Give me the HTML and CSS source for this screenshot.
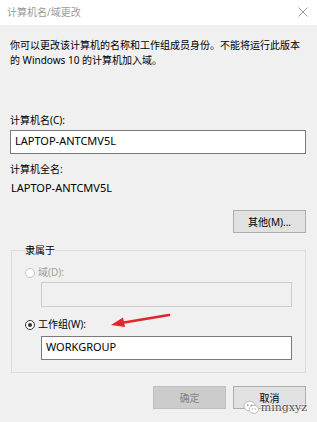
FILE: index.html
```html
<!DOCTYPE html>
<html lang="zh-CN">
<head>
    <meta charset="UTF-8">
    <title>计算机名/域更改</title>
    <link rel="stylesheet" href="styles.css">
</head>
<body>
    <div class="window">
        <!-- Заголовок окна -->
        <div class="titlebar">
            <span class="title">计算机名/域更改</span>
            <svg class="close" width="10" height="10" viewBox="0 0 10 10">
                <path d="M0.5 0.5 L9.5 9.5 M9.5 0.5 L0.5 9.5" stroke="#9a9a9a" stroke-width="1" fill="none"/>
            </svg>
        </div>

        <div class="content">
            <p class="intro">你可以更改该计算机的名称和工作组成员身份。不能将运行此版本的 Windows 10 的计算机加入域。</p>

            <div class="label name-label">计算机名(C):</div>
            <div class="textbox">LAPTOP-ANTCMV5L</div>

            <div class="label full-label">计算机全名:</div>
            <div class="value">LAPTOP-ANTCMV5L</div>

            <div class="more-row">
                <button class="btn">其他(M)...</button>
            </div>

            <!-- Группа "隶属于" -->
            <fieldset class="group">
                <legend>隶属于</legend>
                <div class="radio disabled"><span class="dot"></span>域(D):</div>
                <div class="textbox disabled"></div>
                <div class="radio checked">
                    <span class="dot"></span>工作组(W):
                    <svg class="arrow" width="62" height="16" viewBox="0 0 62 16">
                        <path d="M60 2 L12 10" stroke="#e3262b" stroke-width="2.6" stroke-linecap="round" fill="none"/>
                        <path d="M2 12 L14 4.5 L16 14 Z" fill="#e3262b"/>
                    </svg>
                </div>
                <div class="textbox">WORKGROUP</div>
            </fieldset>

            <div class="actions">
                <button class="btn" disabled>确定</button>
                <button class="btn">取消</button>
            </div>
        </div>

        <!-- Водяной знак -->
        <div class="watermark">
            <svg width="17" height="15" viewBox="0 0 18 16">
                <ellipse cx="7" cy="6.5" rx="6" ry="5" fill="#fff" stroke="#b8b8b8" stroke-width="1"/>
                <ellipse cx="11.5" cy="10" rx="5" ry="4.2" fill="#fff" stroke="#b8b8b8" stroke-width="1"/>
                <circle cx="5" cy="5.5" r="0.9" fill="#9a9a9a"/>
                <circle cx="9" cy="5.5" r="0.9" fill="#9a9a9a"/>
                <circle cx="10" cy="9.5" r="0.7" fill="#9a9a9a"/>
                <circle cx="13" cy="9.5" r="0.7" fill="#9a9a9a"/>
            </svg>
            <span class="wm-text">mingxyz</span>
        </div>
    </div>
</body>
</html>
```

FILE: styles.css
```css
body {
    margin: 0;
    font-family: "Noto Sans", "Noto Sans CJK SC", sans-serif;
    font-size: 10px;
    color: #000;
    background-color: #f0f0f0;
}

.window {
    position: relative;
    width: 317px;
    height: 422px;
    background: #f0f0f0;
    overflow: hidden;
}

/* Заголовок */
.titlebar {
    height: 24px;
    background: #fff;
    display: flex;
    align-items: center;
    justify-content: space-between;
    padding: 0 9px 1px 7px;
}

.title {
    color: #999;
    line-height: 15px;
}

.close {
    display: block;
}

.content {
    padding: 0 11px 0 10px;
}

.intro {
    margin: 13px 0 0;
    line-height: 15px;
}

.label {
    line-height: 15px;
}

.name-label {
    margin-top: 45px;
}

.full-label {
    margin-top: 8px;
}

.value {
    margin-top: 3px;
    line-height: 15px;
    font-size: 11px;
    padding-left: 1px;
}

/* Поле ввода */
.textbox {
    margin-top: 2px;
    height: 24px;
    box-sizing: border-box;
    border: 1px solid #7a7a7a;
    background: #fff;
    font-size: 11px;
    line-height: 20px;
    padding: 0 4px;
}

.textbox.disabled {
    border-color: #cccccc;
    background: #f0f0f0;
    height: 25px;
}

/* Кнопки */
.btn {
    width: 73px;
    height: 23px;
    box-sizing: border-box;
    border: 1px solid #adadad;
    background: #e1e1e1;
    font-family: inherit;
    font-size: 10px;
    color: #000;
    padding: 0;
}

.btn:disabled {
    border-color: #bfbfbf;
    background: #cccccc;
    color: #838383;
}

.more-row {
    margin-top: 15px;
    display: flex;
    justify-content: flex-end;
}

/* Группа */
.group {
    margin: 10px 0 0 1px;
    padding: 7px 13px 12px 13px;
    border: 1px solid #dcdcdc;
    min-width: 0;
}

.group legend {
    padding: 0;
    margin-left: 0;
    line-height: 15px;
}

.group .textbox {
    margin-left: 16px;
}

.radio {
    position: relative;
    display: flex;
    align-items: center;
    gap: 3px;
    line-height: 15px;
}

.radio.disabled {
    color: #a0a0a0;
}

.radio.checked {
    margin-top: 10px;
}

.dot {
    width: 10px;
    height: 10px;
    box-sizing: border-box;
    border-radius: 50%;
    border: 1px solid #333;
    background: #fff;
    position: relative;
}

.radio.disabled .dot {
    border-color: #c4c4c4;
}

.radio.checked .dot::after {
    content: "";
    position: absolute;
    left: 2px;
    top: 2px;
    width: 4px;
    height: 4px;
    border-radius: 50%;
    background: #333;
}

.radio.checked + .textbox {
    margin-top: 4px;
}

/* Красная стрелка поверх окна */
.arrow {
    position: absolute;
    left: 84px;
    top: -4px;
}

.actions {
    margin-top: 13px;
    display: flex;
    justify-content: flex-end;
    gap: 7px;
}

/* Водяной знак */
.watermark {
    position: absolute;
    right: 10px;
    bottom: 7px;
    display: flex;
    align-items: center;
    gap: 1px;
}

.wm-text {
    font-family: "DejaVu Serif", serif;
    font-size: 11px;
    color: #555;
    text-shadow: 0 0 2px #fff, 0 0 2px #fff;
}
```
